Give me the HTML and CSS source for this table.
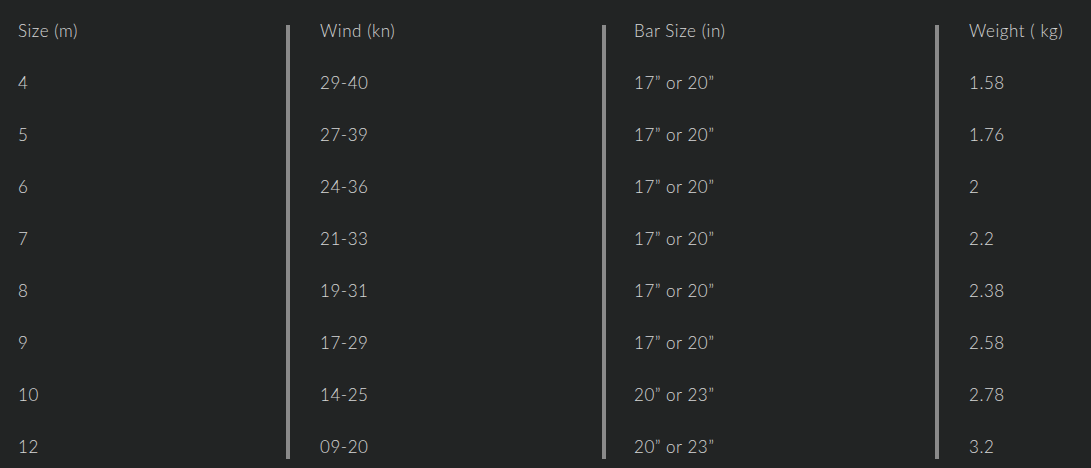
FILE: index.html
```html
<!DOCTYPE html>
<html lang="en">
<head>
<meta charset="utf-8">
<title>Kite sizes</title>
<link rel="stylesheet" href="styles.css">
</head>
<body>
<div class="specs">
  <div class="col col-size">
    <div class="cell">Size (m)</div>
    <div class="cell">4</div>
    <div class="cell">5</div>
    <div class="cell">6</div>
    <div class="cell">7</div>
    <div class="cell">8</div>
    <div class="cell">9</div>
    <div class="cell">10</div>
    <div class="cell">12</div>
  </div>
  <div class="col col-wind">
    <div class="cell">Wind (kn)</div>
    <div class="cell">29-40</div>
    <div class="cell">27-39</div>
    <div class="cell">24-36</div>
    <div class="cell">21-33</div>
    <div class="cell">19-31</div>
    <div class="cell">17-29</div>
    <div class="cell">14-25</div>
    <div class="cell">09-20</div>
  </div>
  <div class="col col-bar">
    <div class="cell">Bar Size (in)</div>
    <div class="cell">17” or 20”</div>
    <div class="cell">17” or 20”</div>
    <div class="cell">17” or 20”</div>
    <div class="cell">17” or 20”</div>
    <div class="cell">17” or 20”</div>
    <div class="cell">17” or 20”</div>
    <div class="cell">20” or 23”</div>
    <div class="cell">20” or 23”</div>
  </div>
  <div class="col col-weight">
    <div class="cell">Weight ( kg)</div>
    <div class="cell">1.58</div>
    <div class="cell">1.76</div>
    <div class="cell">2</div>
    <div class="cell">2.2</div>
    <div class="cell">2.38</div>
    <div class="cell">2.58</div>
    <div class="cell">2.78</div>
    <div class="cell">3.2</div>
  </div>
</div>
</body>
</html>
```
FILE: styles.css
```css
html, body {
  margin: 0;
  padding: 0;
  background: #222424;
}
body {
  width: 1091px;
  height: 468px;
  overflow: hidden;
  font-family: "Lato", "Open Sans", sans-serif;
  font-weight: 300;
  font-size: 17px;
  letter-spacing: 0.55px;
  color: #d6d6d6;
}
.specs {
  display: grid;
  grid-template-columns: 286px 316px 333px 156px;
  align-items: start;
  padding-top: 25px;
}
.col {
  display: flex;
  flex-direction: column;
  gap: 28px;
}
.cell {
  height: 24px;
  line-height: 24px;
  white-space: nowrap;
}
.cell:first-child {
  margin-top: -6px;
}
.col-size {
  padding-left: 18px;
}
.col-wind, .col-bar, .col-weight {
  border-left: 4px solid #8a8a8a;
}
.col-wind { padding-left: 30px; }
.col-bar { padding-left: 28px; }
.col-weight { padding-left: 30px; }
```
